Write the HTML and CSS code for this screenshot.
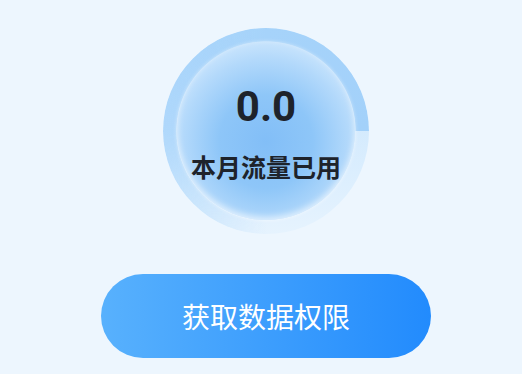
FILE: index.html
```html
<!DOCTYPE html>
<html lang="zh">
<head>
<meta charset="utf-8">
<link rel="stylesheet" href="styles.css">
</head>
<body>
<main class="page">
  <div class="gauge">
    <div class="ring"></div>
    <div class="disc">
      <div class="value">0.0</div>
      <div class="label">本月流量已用</div>
    </div>
  </div>
  <button class="btn">获取数据权限</button>
</main>
</body>
</html>
```
FILE: styles.css
```css
html, body {
  margin: 0;
  padding: 0;
  background: #edf6fe;
}
.page {
  width: 522px;
  height: 374px;
  box-sizing: border-box;
  padding: 28px 0 0 10px;
  display: flex;
  flex-direction: column;
  align-items: center;
  gap: 40px;
  font-family: "Noto Sans CJK SC", "Noto Sans", sans-serif;
}
.gauge {
  position: relative;
  width: 206px;
  height: 206px;
  border-radius: 50%;
  background: linear-gradient(180deg, #c4e2fc 0%, #dbeefe 70%, #e6f3fe 100%);
  display: flex;
  align-items: center;
  justify-content: center;
}
.ring {
  position: absolute;
  inset: 0;
  border-radius: 50%;
  background: conic-gradient(from 180deg, rgba(160, 208, 250, 0) 0deg, rgba(160, 208, 250, 0.7) 90deg, #a6d3fa 180deg, #a3d1fa 270deg, transparent 270deg);
  -webkit-mask: radial-gradient(circle, transparent 89px, #000 90px);
  mask: radial-gradient(circle, transparent 89px, #000 90px);
}
.disc {
  position: relative;
  width: 178px;
  height: 178px;
  border-radius: 50%;
  background: radial-gradient(circle at 50% 56%, #82bef7 0%, #8ec6f8 35%, #b3d9fb 62%, #ddeffe 88%, #f0f8ff 100%);
  box-shadow: inset 0 -3px 6px rgba(255, 255, 255, 0.6), 0 0 4px rgba(255, 255, 255, 0.6);
  display: flex;
  flex-direction: column;
  align-items: center;
  color: #1e232b;
}
.value {
  font-family: Roboto, "Noto Sans", sans-serif;
  font-weight: 700;
  font-size: 42px;
  line-height: 1;
  margin-top: 44px;
}
.label {
  font-weight: 700;
  font-size: 25px;
  line-height: 1;
  margin-top: 26px;
}
.btn {
  width: 330px;
  height: 84px;
  border: none;
  border-radius: 42px;
  background: linear-gradient(90deg, #58b1fd 0%, #3d9efd 50%, #228bfd 100%);
  color: #fff;
  font-family: "Noto Sans CJK SC", "Noto Sans", sans-serif;
  font-size: 28px;
  font-weight: 400;
  padding: 0;
}
```
